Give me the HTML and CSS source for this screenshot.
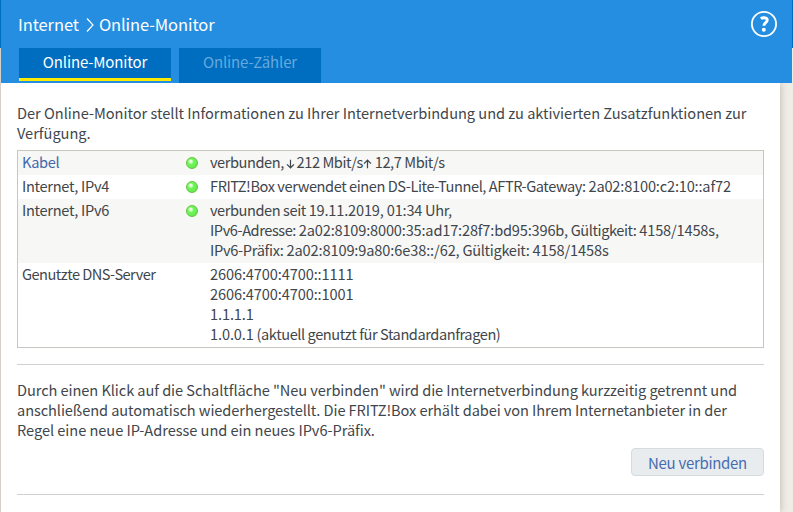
FILE: index.html
```html
<!DOCTYPE html>
<html lang="de">
<head>
<meta charset="utf-8">
<title>Online-Monitor</title>
<link rel="stylesheet" href="styles.css">
</head>
<body>
<div class="shell">
<header class="header">
  <div class="title-row">
    <h1 class="crumbs"><span>Internet</span><svg class="chevron" viewBox="0 0 8 14"><path d="M1 .5 7 7 1 13.5"/></svg><span>Online-Monitor</span></h1>
    <a class="help" aria-label="Hilfe"><svg viewBox="0 0 28 28"><circle cx="14" cy="14" r="12.1"/><path d="M10.8 8.7C12.4 7.5 17.2 6.9 17.2 10.3c0 2.4-3.3 2.5-3.3 5.4"/><circle class="dot" cx="13.8" cy="19.7" r="2"/></svg></a>
  </div>
  <nav class="tabs"><a class="tab active">Online-Monitor</a><a class="tab">Online-Zähler</a></nav>
</header>
<main class="page">
  <p class="intro">Der Online-Monitor stellt Informationen zu Ihrer Internetverbindung und zu aktivierten Zusatzfunktionen zur<br>Verfügung.</p>
  <div class="status">
    <div class="row"><a class="link">Kabel</a><i class="led"></i><div>verbunden, <svg class="arrow down" viewBox="0 0 9 10"><path d="M4.5 .8v8M1 5.4l3.5 3.4L8 5.4"/></svg> 212 Mbit/s<svg class="arrow" viewBox="0 0 9 10"><path d="M4.5 9.2v-8M1 4.6l3.5-3.4L8 4.6"/></svg> 12,7 Mbit/s</div></div>
    <div class="row"><span>Internet, IPv4</span><i class="led"></i><div>FRITZ!Box verwendet einen DS-Lite-Tunnel, AFTR-Gateway: <span class="num tight">2a02:8100:c2:10::af72</span></div></div>
    <div class="row"><span>Internet, IPv6</span><i class="led"></i><div>verbunden seit <span class="num tight">19.11.2019, 01:34</span> Uhr,<br>IPv6-Adresse: <span class="num tight">2a02:8109:8000:35:ad17:28f7:bd95:396b,</span> Gültigkeit: <span class="num tight">4158/1458s,</span><br><span class="prefix">IPv6-Präfix: </span><span class="num">2a02:8109:9a80:6e38::/62,</span> <span class="prefix">Gültigkeit: </span><span class="num">4158/1458s</span></div></div>
    <div class="row"><span class="dns">Genutzte DNS-Server</span><i></i><div><span class="num">2606:4700:4700::1111<br>2606:4700:4700::1001<br>1.1.1.1<br>1.0.0.1</span> (aktuell genutzt für Standardanfragen)</div></div>
  </div>
  <hr>
  <p class="hint">Durch einen Klick auf die Schaltfläche "Neu verbinden" wird die Internetverbindung kurzzeitig getrennt und<br><span class="second">anschließend automatisch wiederhergestellt. Die FRITZ!Box erhält dabei von Ihrem Internetanbieter in der</span><br><span class="third">Regel eine neue IP-Adresse und ein neues IPv6-Präfix.</span></p>
  <div class="actions"><button>Neu verbinden</button></div>
  <hr>
</main>
</div>
</body>
</html>
```
FILE: styles.css
```css
* { box-sizing: border-box; }
body {
  margin: 0;
  height: 512px;
  overflow: hidden;
  background: linear-gradient(#006ec0 48px, #f0ede6 48px);
  color: #3f464c;
  font: 14.6px/20px "Noto Sans CJK JP", "Noto Sans", sans-serif;
}
.shell { height: 512px; padding: 0 1px; display: flex; flex-direction: column; background: linear-gradient(#006ec0 48px, #d5d1c8 48px) 0 0 / 1px 100% no-repeat; }
.header { height: 83px; flex: none; background: #268ee0; color: #fff; padding-left: 18px; }
.title-row { height: 48px; display: flex; justify-content: space-between; align-items: center; padding-right: 14px; }
.crumbs { margin: 0 0 0 -1px; display: flex; align-items: center; font-size: 16.5px; font-weight: 400; line-height: 24px; letter-spacing: -.1px; }
.chevron { width: 8px; height: 14px; margin: 1px 5px 0 7px; fill: none; stroke: #fff; stroke-width: 1.2; }
.help svg { display: block; width: 28px; height: 28px; fill: none; stroke: #fff; stroke-width: 1.8; }
.help path { stroke-width: 2.9; }
.help .dot { fill: #fff; stroke: none; }
.tabs { display: flex; gap: 8px; height: 35px; }
.tab { width: 142px; background: #006ec0; color: #67a9dc; text-align: center; line-height: 28px; font-size: 15px; letter-spacing: -.15px; }
.tab.active { width: 152px; height: 33px; color: #fff; border-bottom: 3px solid #ffeb00; }
.page { flex: 1; width: 779px; background: #fff; padding: 20px 16px 0; box-shadow: 1px 0 7px #c3bfb6; clip-path: inset(0 -12px 0 0); }
p { margin: 0; white-space: nowrap; }
.intro { letter-spacing: -.02px; }
.hint { margin-top: -1px; letter-spacing: -.07px; }
.second { letter-spacing: -.08px; }
.third { letter-spacing: -.04px; }
.status { margin-top: 7px; border: 1px solid #c6c7c1; letter-spacing: -.43px; }
.row { display: grid; grid-template-columns: 164px 24px 1fr; padding: 1px 4px 3px; white-space: nowrap; }
.row:nth-child(odd) { background: #f7f7f5; }
.row > span, .link { letter-spacing: -.3px; }
.row > .dns { letter-spacing: -.53px; }
.num { letter-spacing: -.12px; }
.tight { letter-spacing: -.18px; }
.prefix { letter-spacing: -.3px; }
.link { color: #3f68ad; }
.led { width: 12px; height: 12px; margin-top: 5px; border: 1px solid #68c340; border-radius: 50%; background: radial-gradient(circle at 38% 35%, #e8ffdf 0 12%, #70f65b 32%, #64ec50 70%, #56c83d); }
.arrow { width: 9px; height: 10px; vertical-align: -1px; fill: none; stroke: #3f464c; stroke-width: 1.2; }
.down { margin: 0 -1px; }
hr { border: 0; height: 1px; margin: 16px 0; background: #d0d0d0; }
.actions { display: flex; justify-content: flex-end; margin: 8px 0 18px; }
button { width: 133px; height: 28px; padding: 0; border: 1px solid #d5dcdd; border-radius: 4px; background: #e8ecef; color: #466caf; font: 15px/25px "Noto Sans CJK JP", "Noto Sans", sans-serif; letter-spacing: -.3px; }
```
